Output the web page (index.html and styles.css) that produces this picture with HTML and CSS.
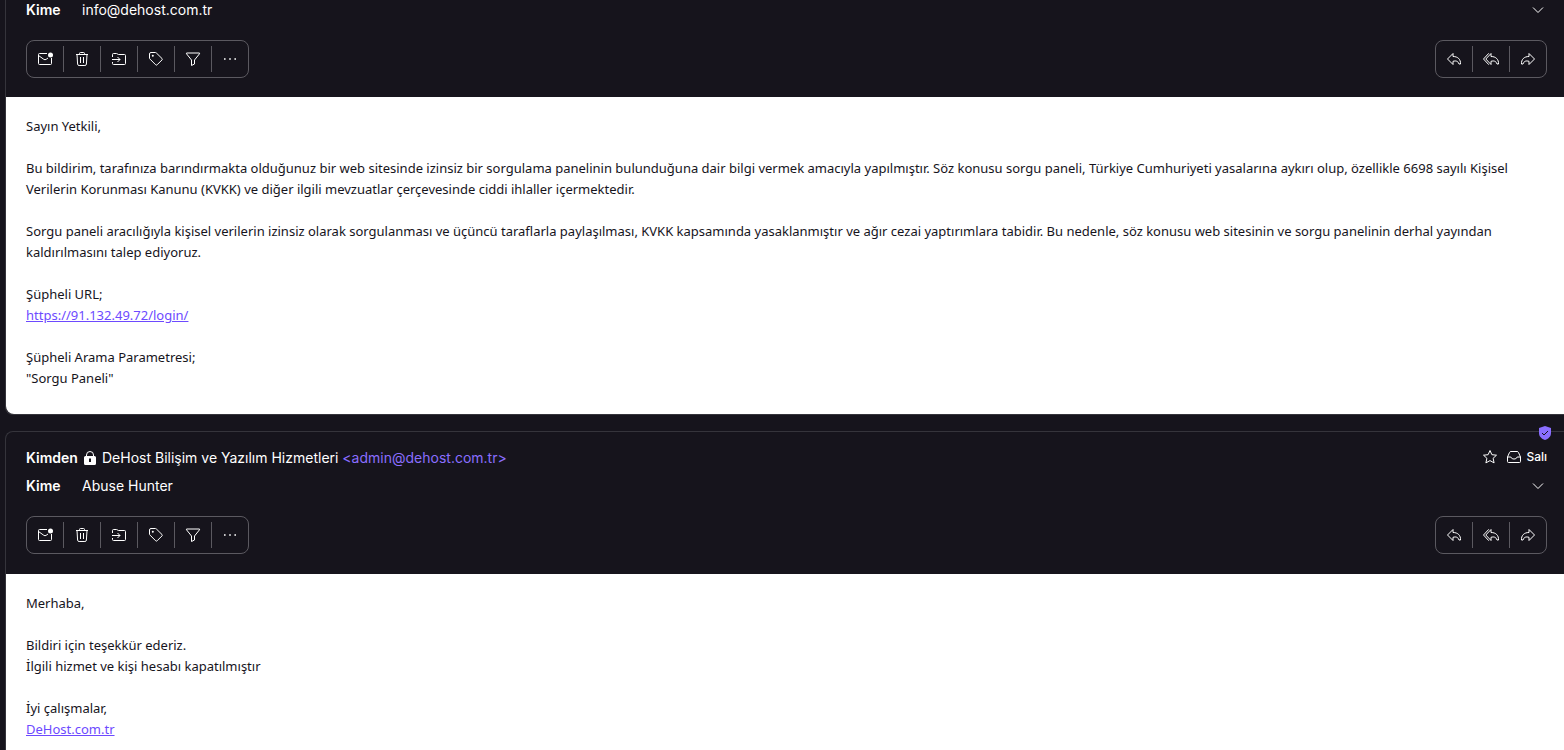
FILE: index.html
```html
<!DOCTYPE html>
<html lang="tr">
<head>
  <meta charset="utf-8">
  <title>Mail</title>
  <link rel="stylesheet" href="styles.css">
</head>
<body>
  <!-- icons used by both messages -->
  <svg class="sprite" aria-hidden="true">
    <symbol id="unread" viewBox="0 0 16 16">
      <path d="M10 2.500H2.500a1 1 0 0 0-1 1v9a1 1 0 0 0 1 1h11a1 1 0 0 0 1-1V7M1.500 4.500l5.300 3.800a2 2 0 0 0 2.400 0L11 7"/>
      <circle class="solid" cx="13.500" cy="4" r="2.500"/>
    </symbol>
    <symbol id="trash" viewBox="0 0 16 16">
      <path d="M2 3.500h12M5.500 3.500v-1a1 1 0 0 1 1-1h3a1 1 0 0 1 1 1v1M3 3.500l.6 9.600a1.500 1.500 0 0 0 1.500 1.400h5.800a1.500 1.500 0 0 0 1.500-1.400L13 3.500M6.500 6v6M9.500 6v6"/>
    </symbol>
    <symbol id="move" viewBox="0 0 16 16">
      <path d="M1.500 6V3.500a1 1 0 0 1 1-1h3l2 1h6a1 1 0 0 1 1 1v8a1 1 0 0 1-1 1h-11a1 1 0 0 1-1-1V11M1 8.500h8M6.500 6L9 8.500 6.500 11"/>
    </symbol>
    <symbol id="tag" viewBox="0 0 16 16">
      <path d="M1.500 3v4a1.500 1.500 0 0 0 .5 1.100l5.700 5.700a1 1 0 0 0 1.400 0l4.900-4.900a1 1 0 0 0 0-1.400L8.400 2A1.500 1.500 0 0 0 7.300 1.500H3A1.500 1.500 0 0 0 1.500 3z"/>
      <circle class="solid" cx="4.800" cy="4.800" r="1"/>
    </symbol>
    <symbol id="filter" viewBox="0 0 16 16">
      <path d="M1.500 2h13v.8L9.500 9v4l-3 1.500V9l-5-6.200z"/>
    </symbol>
    <symbol id="more" viewBox="0 0 16 16">
      <path class="solid" d="M2 7.200h1.600v1.600H2zM7.200 7.200h1.600v1.600H7.200zM12.400 7.200H14v1.600h-1.600z"/>
    </symbol>
    <symbol id="reply" viewBox="0 0 16 16">
      <path d="M7 2.500L1.500 8 7 13.500v-3.200c3-.8 5-.3 6 2.700h1.500c.3-4.500-2.500-7.500-7.500-7.500z"/>
    </symbol>
    <symbol id="replyall" viewBox="0 0 16 16">
      <path d="M8 2.500L2.800 8 8 13.500v-3.200c3-.8 5-.3 6 2.700h1.500c.3-4.500-2.500-7.500-7.500-7.500zM5.800 2.300L.5 8l5.300 5.700"/>
    </symbol>
    <symbol id="star" viewBox="0 0 16 16">
      <path d="M8 1.500l1.900 4.200 4.600.5-3.400 3.100 1 4.600L8 11.600l-4.100 2.300 1-4.600L1.500 6.200l4.600-.5z"/>
    </symbol>
    <symbol id="inbox" viewBox="0 0 16 16">
      <path d="M1.500 8l2-4.500a1.500 1.500 0 0 1 1.400-1h6.200a1.500 1.500 0 0 1 1.400 1l2 4.500v4.500a1 1 0 0 1-1 1h-11a1 1 0 0 1-1-1zM1.500 8h3.300c.5 1.300 1.600 2 3.200 2s2.700-.7 3.200-2h3.300"/>
    </symbol>
    <symbol id="chevron" viewBox="0 0 16 16">
      <path d="M3 5.500l5 5 5-5"/>
    </symbol>
    <symbol id="lock" viewBox="0 0 16 16">
      <path d="M4.500 7V5a3.500 3.500 0 0 1 7 0v2"/>
      <path class="solid" fill-rule="evenodd" d="M3.500 6h9A1.500 1.500 0 0 1 14 7.500v6a1.500 1.500 0 0 1-1.500 1.500h-9A1.500 1.500 0 0 1 2 13.500v-6A1.500 1.500 0 0 1 3.500 6zM7 8.500V12h2V8.500z"/>
    </symbol>
  </svg>

  <main class="thread">
    <article class="message message-first">
      <header class="message-header">
        <div class="row">
          <span class="label">Kime</span>
          <span class="person">info@dehost.com.tr</span>
          <button class="details" aria-label="Ayrıntılar"><svg class="icon"><use href="#chevron"/></svg></button>
        </div>
        <div class="toolbar">
          <div class="group">
            <button aria-label="Okunmadı"><svg class="icon"><use href="#unread"/></svg></button>
            <button aria-label="Sil"><svg class="icon"><use href="#trash"/></svg></button>
            <button aria-label="Taşı"><svg class="icon"><use href="#move"/></svg></button>
            <button aria-label="Etiket"><svg class="icon"><use href="#tag"/></svg></button>
            <button aria-label="Filtre"><svg class="icon"><use href="#filter"/></svg></button>
            <button aria-label="Diğer"><svg class="icon"><use href="#more"/></svg></button>
          </div>
          <div class="group">
            <button aria-label="Yanıtla"><svg class="icon"><use href="#reply"/></svg></button>
            <button aria-label="Tümünü yanıtla"><svg class="icon"><use href="#replyall"/></svg></button>
            <button aria-label="İlet"><svg class="icon flip"><use href="#reply"/></svg></button>
          </div>
        </div>
      </header>
      <div class="message-body">
        <p>Sayın Yetkili,</p>
        <p>Bu bildirim, tarafınıza barındırmakta olduğunuz bir web sitesinde izinsiz bir sorgulama panelinin bulunduğuna dair bilgi vermek amacıyla yapılmıştır. Söz konusu sorgu paneli, Türkiye Cumhuriyeti yasalarına aykırı olup, özellikle 6698 sayılı Kişisel Verilerin Korunması Kanunu (KVKK) ve diğer ilgili mevzuatlar çerçevesinde ciddi ihlaller içermektedir.</p>
        <p>Sorgu paneli aracılığıyla kişisel verilerin izinsiz olarak sorgulanması ve üçüncü taraflarla paylaşılması, KVKK kapsamında yasaklanmıştır ve ağır cezai yaptırımlara tabidir. Bu nedenle, söz konusu web sitesinin ve sorgu panelinin derhal yayından kaldırılmasını talep ediyoruz.</p>
        <p>Şüpheli URL;<br><a href="https://91.132.49.72/login/">https://91.132.49.72/login/</a></p>
        <p>Şüpheli Arama Parametresi;<br>"Sorgu Paneli"</p>
      </div>
    </article>

    <article class="message">
      <svg class="shield" viewBox="0 0 14 14" aria-hidden="true">
        <path fill="#8a6eff" d="M7 0l6 2v5c0 3.500-2.500 5.800-6 7-3.500-1.200-6-3.500-6-7V2z"/>
        <path fill="none" stroke="#16141c" d="M4 7l2 2 4-4"/>
      </svg>
      <header class="message-header">
        <div class="row row-from">
          <span class="label">Kimden</span>
          <svg class="lock"><use href="#lock"/></svg>
          <span class="person">DeHost Bilişim ve Yazılım Hizmetleri <span class="address">&lt;admin@dehost.com.tr&gt;</span></span>
          <div class="meta">
            <button class="star" aria-label="Yıldız"><svg class="icon"><use href="#star"/></svg></button>
            <svg class="icon"><use href="#inbox"/></svg>
            <time>Salı</time>
          </div>
        </div>
        <div class="row">
          <span class="label">Kime</span>
          <span class="person">Abuse Hunter</span>
          <button class="details" aria-label="Ayrıntılar"><svg class="icon"><use href="#chevron"/></svg></button>
        </div>
        <div class="toolbar">
          <div class="group">
            <button aria-label="Okunmadı"><svg class="icon"><use href="#unread"/></svg></button>
            <button aria-label="Sil"><svg class="icon"><use href="#trash"/></svg></button>
            <button aria-label="Taşı"><svg class="icon"><use href="#move"/></svg></button>
            <button aria-label="Etiket"><svg class="icon"><use href="#tag"/></svg></button>
            <button aria-label="Filtre"><svg class="icon"><use href="#filter"/></svg></button>
            <button aria-label="Diğer"><svg class="icon"><use href="#more"/></svg></button>
          </div>
          <div class="group">
            <button aria-label="Yanıtla"><svg class="icon"><use href="#reply"/></svg></button>
            <button aria-label="Tümünü yanıtla"><svg class="icon"><use href="#replyall"/></svg></button>
            <button aria-label="İlet"><svg class="icon flip"><use href="#reply"/></svg></button>
          </div>
        </div>
      </header>
      <div class="message-body">
        <p>Merhaba,</p>
        <p>Bildiri için teşekkür ederiz.<br>İlgili hizmet ve kişi hesabı kapatılmıştır</p>
        <p>İyi çalışmalar,<br><a href="https://dehost.com.tr">DeHost.com.tr</a></p>
      </div>
    </article>
  </main>
</body>
</html>
```
FILE: styles.css
```css
* {
  box-sizing: border-box;
}
body {
  margin: 0;
  height: 100vh;
  overflow: hidden;
  background-color: #16141c;
  color: white;
  font-family: Inter, sans-serif;
  font-size: 14px;
  line-height: 20px;
}
p {
  margin: 0 0 21px;
}
button {
  display: flex;
  align-items: center;
  justify-content: center;
  padding: 0;
  border: none;
  background: none;
  color: inherit;
  cursor: pointer;
}
svg {
  flex-shrink: 0;
}
.sprite {
  display: none;
}
.icon, .lock {
  width: 16px;
  height: 16px;
  fill: none;
  stroke: currentColor;
}
.solid {
  fill: currentColor;
  stroke: none;
}
.flip {
  transform: scaleX(-1);
}

.thread {
  display: flex;
  flex-direction: column;
  gap: 16px;
  padding-left: 5px;
}
.message {
  position: relative;
  border: 1px solid #35343b;
  border-right: none;
  border-radius: 8px 0 0 8px;
}
.message-first {
  border-top: none;
  border-top-left-radius: 0;
}
.message-header {
  padding: 16px 17px 20px 20px;
}
.message-first .message-header {
  padding-top: 0;
  padding-bottom: 19px;
}
.row {
  display: flex;
  align-items: center;
  height: 20px;
}
.row-from {
  margin-bottom: 8px;
}
.label {
  width: 56px;
  font-weight: 600;
}
.lock {
  margin-right: 4px;
}
.address {
  color: #8a6eff;
}
.meta {
  display: flex;
  align-items: center;
  gap: 4px;
  margin-left: auto;
  padding-bottom: 3px;
  font-size: 12px;
  font-weight: 500;
}
.star {
  margin-right: 4px;
}
.details {
  width: 18px;
  margin-left: auto;
}
.toolbar {
  display: flex;
  justify-content: space-between;
  margin-top: 20px;
}
.group {
  display: flex;
  padding: 5px 0;
  border: 1px solid #5b5960;
  border-radius: 8px;
}
.group button {
  width: 37px;
  height: 26px;
}
.group button:first-child {
  width: 36px;
}
.group button + button {
  border-left: 1px solid #5b5960;
}
.shield {
  position: absolute;
  top: -6px;
  right: 12px;
  width: 14px;
  height: 14px;
}

.message-body {
  padding: 19px 20px 4px;
  border-bottom-left-radius: 8px;
  background-color: white;
  color: #16141c;
  font-family: "Noto Sans", sans-serif;
  font-size: 13px;
  line-height: 21px;
}
.message-body a {
  color: #6d4aff;
}
```
